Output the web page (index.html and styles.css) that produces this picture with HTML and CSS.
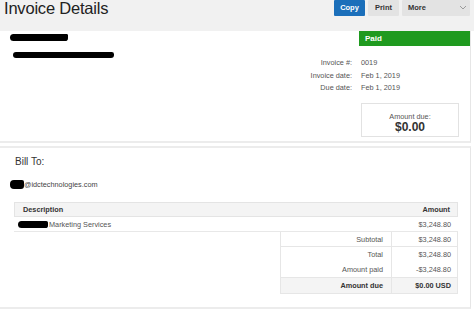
FILE: index.html
```html
<!DOCTYPE html>
<html>
<head>
<meta charset="utf-8">
<link rel="stylesheet" href="styles.css">
</head>
<body>
<header class="topbar">
  <h1 class="title">Invoice Details</h1>
  <div class="actions">
    <button class="btn btn-primary">Copy</button>
    <button class="btn btn-gray">Print</button>
    <button class="btn btn-gray btn-more">More
      <svg class="chev" width="8" height="5" viewBox="0 0 8 5"><polyline points="1,1 4,4 7,1" fill="none" stroke="#9a9a9a" stroke-width="1"/></svg>
    </button>
  </div>
</header>

<section class="card card-top">
  <div class="from">
    <span class="redact r1"></span>
    <span class="redact r2"></span>
  </div>
  <div class="status">
    <div class="paid">Paid</div>
    <dl class="meta">
      <dt>Invoice #:</dt><dd>0019</dd>
      <dt>Invoice date:</dt><dd>Feb 1, 2019</dd>
      <dt>Due date:</dt><dd>Feb 1, 2019</dd>
    </dl>
    <div class="duebox">
      <div class="due-label">Amount due:</div>
      <div class="due-value">$0.00</div>
    </div>
  </div>
</section>

<section class="card card-bottom">
  <h2 class="billto">Bill To:</h2>
  <div class="email"><span class="redact r3"></span>@idctechnologies.com</div>

  <div class="items">
    <div class="row head">
      <span>Description</span>
      <span>Amount</span>
    </div>
    <div class="row item">
      <span class="desc"><span class="redact r4"></span>Marketing Services</span>
      <span>$3,248.80</span>
    </div>
    <div class="totals">
      <div class="trow sep"><span class="tl">Subtotal</span><span class="tv">$3,248.80</span></div>
      <div class="trow"><span class="tl">Total</span><span class="tv">$3,248.80</span></div>
      <div class="trow"><span class="tl">Amount paid</span><span class="tv">-$3,248.80</span></div>
      <div class="trow final"><span class="tl">Amount due</span><span class="tv">$0.00 USD</span></div>
    </div>
  </div>
</section>
</body>
</html>
```

FILE: styles.css
```css
* { box-sizing: border-box; }
html, body { margin: 0; padding: 0; background: #fff; }
body {
  width: 474px;
  height: 312px;
  overflow: hidden;
  font-family: "Liberation Sans", Arial, sans-serif;
  color: #555;
}

.topbar {
  height: 31px;
  background: #f1f1f1;
  display: flex;
  justify-content: space-between;
  align-items: flex-start;
  padding-left: 4px;
  padding-right: 4px;
}
.title {
  margin: 0;
  font-size: 16.5px;
  font-weight: normal;
  color: #222;
  line-height: 17px;
  letter-spacing: -0.2px;
}
.actions {
  display: flex;
  gap: 3px;
}
.btn {
  height: 16px;
  border: 0;
  padding: 0;
  font-family: "Liberation Sans", Arial, sans-serif;
  font-size: 7.5px;
  font-weight: bold;
  line-height: 16px;
  border-radius: 1px;
}
.btn-primary {
  width: 31px;
  background: #1b6fba;
  color: #fff;
}
.btn-gray {
  width: 31px;
  background: #e3e3e3;
  color: #333;
}
.btn-more {
  width: 68px;
  display: flex;
  align-items: center;
  justify-content: space-between;
  padding: 0 3px 0 6px;
  text-align: left;
}
.chev { margin-bottom: 1px; }

.card {
  border-right: 1px solid #e6e6e6;
  margin-right: 3px;
}
.card-top {
  height: 112px;
  border-bottom: 2px solid #ececec;
  display: flex;
  justify-content: space-between;
}
.from {
  position: relative;
  padding-top: 3px;
  display: flex;
  flex-direction: column;
}
.redact {
  display: inline-block;
  background: #000;
  border-radius: 4px;
}
.r1 { width: 58px; height: 7px; margin-left: 10px; border-radius: 5px 2px 4px 5px; }
.r2 { width: 101px; height: 6px; margin-left: 13px; margin-top: 11px; border-radius: 4px 3px 4px 4px; }
.r3 { width: 14px; height: 9px; margin-left: 0; border-radius: 4px 2px 3px 4px; vertical-align: -2px; }
.r4 { width: 30px; height: 7px; border-radius: 4px 2px 3px 4px; vertical-align: -1px; margin-right: 1px; }

.status {
  width: 170px;
  display: flex;
  flex-direction: column;
  align-items: flex-end;
}
.paid {
  width: 111px;
  height: 15px;
  background: #1f9a1f;
  color: #fff;
  font-size: 8px;
  font-weight: bold;
  line-height: 15px;
  padding-left: 6px;
}
.meta {
  margin: 11px 0 0 0;
  align-self: stretch;
  display: grid;
  grid-template-columns: 52px auto;
  column-gap: 9px;
  row-gap: 0;
  font-size: 7.3px;
  line-height: 12.5px;
  color: #555;
}
.meta dt { text-align: right; }
.meta dd { margin: 0; }
.duebox {
  width: 98px;
  height: 34px;
  margin-top: 8px;
  margin-right: 11px;
  border: 1px solid #e2e2e2;
  text-align: center;
  padding-top: 8px;
}
.due-label {
  font-size: 7.3px;
  line-height: 9px;
  color: #555;
}
.due-value {
  font-size: 12px;
  font-weight: bold;
  line-height: 12px;
  color: #333;
}

.card-bottom {
  margin-top: 3px;
  height: 163px;
  border-top: 2px solid #ececec;
  border-bottom: 2px solid #ececec;
  padding-top: 7px;
}
.billto {
  margin: 0 0 0 15px;
  font-size: 10px;
  font-weight: normal;
  color: #333;
  line-height: 13px;
}
.email {
  margin: 12px 0 0 10px;
  font-size: 7.3px;
  line-height: 10px;
  color: #444;
}
.items {
  margin: 12px 0 0 14px;
  width: 444px;
  font-size: 7.3px;
}
.row {
  height: 15px;
  display: flex;
  justify-content: space-between;
  align-items: center;
  padding: 0 7px 0 8px;
}
.head {
  background: #f4f4f4;
  border: 1px solid #e4e4e4;
  font-weight: bold;
  color: #333;
}
.item {
  border-bottom: 1px solid #e8e8e8;
  padding-left: 4px;
  color: #555;
}
.desc { display: flex; align-items: center; }
.totals {
  margin-left: 266px;
  width: 178px;
  border: 1px solid #e6e6e6;
  border-top: 0;
}
.trow {
  display: grid;
  grid-template-columns: 111px 1fr;
  height: 15px;
  line-height: 15px;
}
.trow.sep { border-bottom: 1px solid #e6e6e6; }
.tl {
  text-align: right;
  padding-right: 8px;
  border-right: 1px solid #e6e6e6;
}
.tv {
  text-align: right;
  padding-right: 6px;
}
.final {
  background: #f4f4f4;
  border-top: 1px solid #e6e6e6;
  font-weight: bold;
  color: #333;
  height: 16px;
}
```
